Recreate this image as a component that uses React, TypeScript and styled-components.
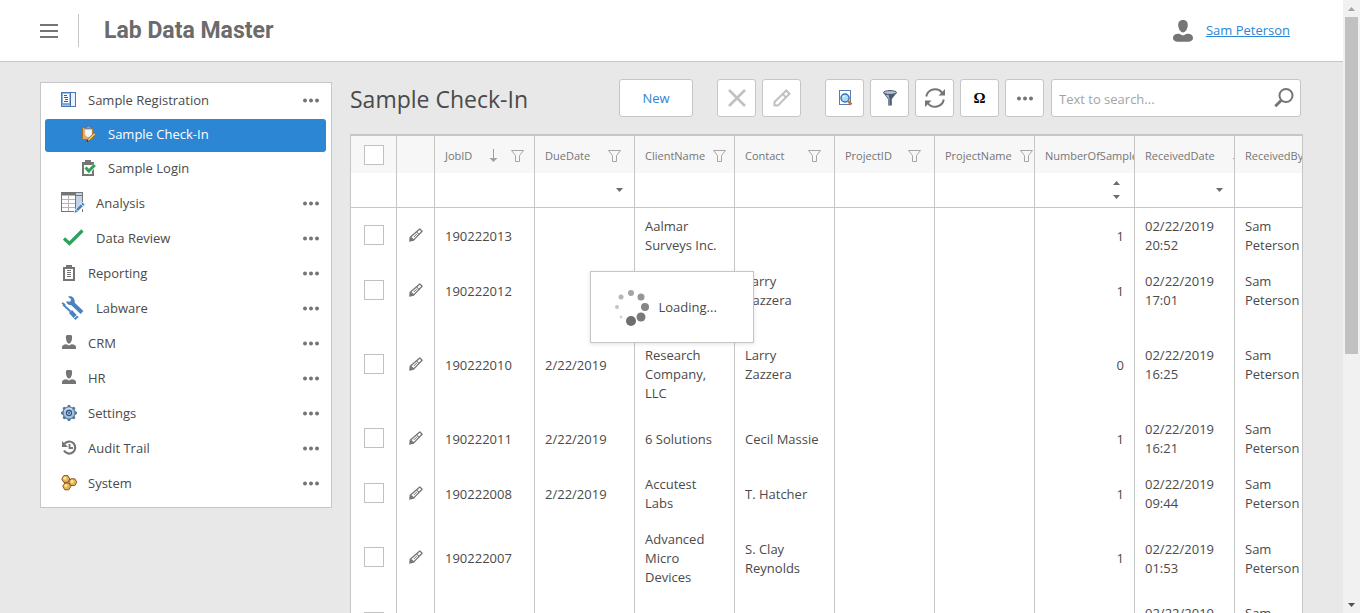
import React from 'react';
import styled, { createGlobalStyle } from 'styled-components';

const line = '#c6c6c6';
const blue = '#2c86d3';
const grey = '#757575';

const GlobalStyle = createGlobalStyle`
  * { box-sizing: border-box; }
  body {
    margin: 0;
    background: #e8e8e8;
    color: #4a4a4a;
    font: 13px/19px "Open Sans", "Noto Sans", sans-serif;
  }
  button, input { font: inherit; color: inherit; }
  svg { display: block; flex: none; }
`;

const Viewport = styled.div`
  display: flex;
  height: 100vh;
  overflow: hidden;
`;

const Page = styled.div`
  position: relative;
  flex: 1;
  min-width: 0;
  overflow: hidden;
`;

const ScrollTrack = styled.div`
  display: flex;
  flex-direction: column;
  width: 17px;
  background: #f1f1f1;
`;

const ScrollArrow = styled.button`
  display: grid;
  place-items: center;
  flex: none;
  height: 17px;
  padding: 0;
  border: 0;
  background: none;
`;

const ScrollThumb = styled.div`
  flex: 0 0 auto;
  height: 55%;
  margin: 0 2px;
  background: #c1c1c1;
`;

const ScrollRest = styled.div`
  flex: 1;
`;

const Header = styled.header`
  display: flex;
  align-items: center;
  height: 62px;
  padding: 0 53px 0 40px;
  background: #fff;
  border-bottom: 1px solid ${line};
`;

const PlainButton = styled.button`
  display: flex;
  padding: 0;
  border: 0;
  background: none;
  cursor: pointer;
`;

const HeaderRule = styled.span`
  width: 1px;
  height: 33px;
  margin: 0 25px 0 20px;
  background: ${line};
`;

const Logo = styled.span`
  flex: 1;
  color: #6b6b6b;
  font: bold 23px/32px Roboto, "Open Sans", sans-serif;
`;

const UserLink = styled.a`
  margin-left: 13px;
  color: ${blue};
`;

const Body = styled.div`
  display: flex;
  align-items: flex-start;
  gap: 18px;
  padding: 0 40px;
`;

const Sidebar = styled.nav`
  flex: 0 0 292px;
  margin-top: 20px;
  padding: 0 5px 6px 4px;
  background: #fff;
  border: 1px solid ${line};
`;

const NavList = styled.ul`
  margin: 0;
  padding: 0;
  list-style: none;
`;

const NavRow = styled.div`
  display: flex;
  align-items: center;
  height: 35px;
  padding: 0 7px 0 16px;
`;

const NavLink = styled.a`
  display: flex;
  flex: 1;
  align-items: center;
  gap: 11px;
  color: inherit;
  text-decoration: none;
  svg { margin-bottom: 2px; }
`;

const SubLink = styled.a<{ $active?: boolean }>`
  display: flex;
  align-items: center;
  gap: 11px;
  height: 33px;
  margin-top: 1px;
  padding: 0 36px 2px;
  border-radius: 3px;
  background: ${p => (p.$active ? blue : 'none')};
  color: ${p => (p.$active ? '#fff' : 'inherit')};
  text-decoration: none;
  svg { margin-bottom: 2px; }
`;

const Main = styled.main`
  flex: 1;
  min-width: 0;
`;

const Toolbar = styled.div`
  display: flex;
  align-items: center;
  gap: 7px;
  height: 72px;
  padding: 0 2px 0 0;
`;

const Title = styled.h1`
  flex: 1;
  margin: 0;
  padding-top: 1px;
  font-size: 23px;
  line-height: 32px;
  font-weight: 400;
`;

const ToolGroup = styled.div`
  display: flex;
  gap: 6px;
  margin-right: 17px;
  &:last-of-type { margin-right: 0; }
`;

const ToolButton = styled.button<{ $wide?: boolean }>`
  display: grid;
  place-items: center;
  width: ${p => (p.$wide ? 74 : 39)}px;
  height: 38px;
  padding: 0;
  background: #fff;
  border: 1px solid ${line};
  border-radius: 3px;
  color: ${blue};
`;

const Omega = styled.span`
  color: #000;
  font: bold 15px/20px "Liberation Serif", serif;
`;

const SearchBox = styled.label`
  display: flex;
  align-items: center;
  width: 250px;
  height: 38px;
  padding: 0 6px 0 7px;
  background: #fff;
  border: 1px solid ${line};
  border-radius: 3px;
`;

const SearchInput = styled.input`
  flex: 1;
  min-width: 0;
  padding: 2px 0 0;
  border: 0;
  outline: 0;
  background: none;
  &::placeholder { color: #a3a3a3; opacity: 1; }
`;

const GridFrame = styled.div`
  overflow: hidden;
  background: #fff;
  border: 1px solid ${line};
  border-top-width: 2px;
`;

const Grid = styled.table`
  width: 984px;
  table-layout: fixed;
  border-collapse: separate;
  border-spacing: 0;
`;

const HeadCell = styled.th<{ $mid?: boolean }>`
  height: 37px;
  padding: ${p => (p.$mid ? '0' : '2px 0 0 10px')};
  overflow: hidden;
  background: #f7f7f7;
  border-right: 1px solid ${line};
  color: ${grey};
  font-size: 11px;
  font-weight: 400;
  text-align: left;
`;

const HeadContent = styled.div`
  display: flex;
  align-items: center;
  width: 79px;
  white-space: nowrap;
`;

const SortMark = styled.span`
  margin-left: 17px;
`;

const FilterMark = styled.span<{ $afterSort?: boolean }>`
  margin-left: auto;
  padding: ${p => (p.$afterSort ? '0 3px 0 13px' : '0 3px 0 8px')};
`;

const FilterCell = styled.td`
  height: 35px;
  padding: 0;
  border-right: 1px solid ${line};
  border-bottom: 1px solid ${line};
`;

const FilterBox = styled.div`
  display: flex;
  align-items: center;
  height: 34px;
  padding: 0 11px 0 10px;
`;

const FilterInput = styled.input`
  flex: 1;
  min-width: 0;
  padding: 0;
  border: 0;
  outline: 0;
  background: none;
`;

const Spinner = styled.span`
  display: grid;
  gap: 10px;
  margin-right: 3px;
`;

const Cell = styled.td<{ $num?: boolean; $mid?: boolean }>`
  padding: ${p => (p.$mid ? '0 0 2px' : '9px 0 8px 10px')};
  padding-right: ${p => (p.$num ? '10px' : '0')};
  border-right: 1px solid ${line};
  text-align: ${p => (p.$num ? 'right' : 'left')};
  vertical-align: middle;
  white-space: pre-line;
`;

const Center = styled.div`
  display: grid;
  place-items: center;
`;

const CheckBox = styled.input`
  appearance: none;
  width: 20px;
  height: 20px;
  margin: 0;
  background: #fff;
  border: 1px solid #c1c1c1;
`;

const Overlay = styled.div`
  position: absolute;
  inset: 0;
  display: grid;
  place-items: center;
  pointer-events: none;
`;

const LoadingPanel = styled.div`
  display: flex;
  align-items: center;
  gap: 9px;
  width: 164px;
  height: 72px;
  padding: 2px 0 0 23px;
  background: #fff;
  border: 1px solid ${line};
  box-shadow: 0 1px 4px rgba(0, 0, 0, 0.12);
`;

const Dots = () => (
  <svg width="16" height="5" fill={grey}>
    <circle cx="2" cy="2.5" r="2" /><circle cx="8" cy="2.5" r="2" /><circle cx="14" cy="2.5" r="2" />
  </svg>
);

const Caret = ({ up, color = '#6b6b6b' }: { up?: boolean; color?: string }) => (
  <svg width="7" height="4" fill={color}><path d={up ? 'M0 4L3.5 0L7 4Z' : 'M0 0H7L3.5 4Z'} /></svg>
);

const Person = () => (
  <svg width="16" height="16" fill={grey}>
    <path d="M6.500 0h3c1.200 0 1.700.8 1.600 2.500C11 5.500 10 8 8 8.800 6 8 5 5.500 4.900 2.500 4.800.8 5.300 0 6.500 0Z" />
    <path d="M1 14v-2.200C1 10.500 2.500 9.500 5.500 9.200L8 10.500l2.500-1.300c3 .3 4.500 1.300 4.500 2.600V14Z" />
  </svg>
);

const UserIcon = () => (
  <svg width="20" height="22" fill={grey}>
    <path d="M10 0c3.300 0 5 2.200 4.800 5.300C14.600 8.700 12.600 12.500 10 12.500S5.400 8.700 5.200 5.300C5 2.200 6.700 0 10 0Z" />
    <path d="M0 18c0-2.800 2.500-4.200 5.500-4.200 2 0 2.500 1.600 4.500 1.600s2.500-1.600 4.500-1.600C17.500 13.800 20 15.200 20 18c0 2.600-2.500 3.800-5 3.800H5c-2.500 0-5-1.200-5-3.800Z" />
  </svg>
);

const RegistrationIcon = () => (
  <svg width="16" height="16">
    <rect x=".5" y=".5" width="14" height="14" fill="#9fbfe5" stroke="#4a78b5" />
    <path d="M1 3h2M1 6h2M1 9h2M1 12h8" stroke="#5d8dca" />
    <path d="M2 2h6v9H2Z" fill="#f8fbff" />
    <path d="M3 3.500h3M3 5.500h4M4 7.500h3M3 9.500h4" stroke="#4a5a70" />
    <path d="M10 1h4v13h-4Z" fill="#eaf2fb" />
    <path d="M9.500 1v13" stroke="#3f6eac" />
  </svg>
);

const CheckInIcon = () => (
  <svg width="16" height="16">
    <rect x="1.500" y="1.500" width="10" height="12" rx="1" fill="#e6ab5f" stroke="#b06a22" />
    <path d="M4 2.500h7V11H6.500L4 9Z" fill="#f4f7fd" stroke="#c5cde0" strokeWidth=".5" />
    <path d="M4 3V1.200h1.500L6.500 0h2l1 1.200H11V3Z" fill="#8d9bb6" stroke="#4f5e80" strokeWidth=".6" />
    <path d="m13 6.800 1.800 1.800-6.500 6L6 15.300l.8-2.300Z" fill="#f6c25b" stroke="#9d5f1c" strokeWidth=".8" />
    <path d="m5.500 15.800.6-2 1.600 1.400Z" fill="#222" />
  </svg>
);

const LoginIcon = () => (
  <svg width="16" height="16">
    <path d="M1 2h3V0h6v2h3v14H1Z" fill={grey} />
    <path d="M3 5h8v9H3Z" fill="#fff" />
    <path d="m4.500 7.500 3.500 4 6-6.500" fill="none" stroke="#fff" strokeWidth="4" />
    <path d="m4.500 7.500 3.300 3.500L13.800 5" fill="none" stroke="#2ba15a" strokeWidth="3" />
  </svg>
);

const AnalysisIcon = () => (
  <svg width="24" height="24">
    <path d="M0 1h22v20H0Z" fill="#fff" />
    <path d="M15 1h7v12l-7 8Z" fill="#c2d3e6" />
    <path d="M0 1h14v3.500H0Z" fill={grey} />
    <path d="M.5 1v20M22 1.500h-8M0 20.500h14M21.500 1v11M14.500 1v20M21.500 18v3" stroke={grey} fill="none" />
    <path d="M7.500 4v16M1 8.500h13M1 12.500h13M1 16.500h13" stroke="#b5b5b5" />
    <path d="M15 4.500h6" stroke={grey} />
    <path d="m21.500 11 2.500 2.500-7.800 7.800L13 22.500l1-3.700Z" fill="#4a82bf" stroke="#fff" strokeWidth=".8" />
    <path d="m19.500 12.500 3 3M14.500 18l2.300 2.300" stroke="#fff" strokeWidth=".8" />
  </svg>
);

const CheckIcon = () => (
  <svg width="24" height="24" fill="none" stroke="#2ba15a" strokeWidth="3.200">
    <path d="m3 12.500 5.500 5L21.500 4.500" />
  </svg>
);

const ReportIcon = () => (
  <svg width="16" height="16">
    <path d="M2 2h3V0h6v2h3v14H2Z" fill={grey} />
    <path d="M4 4h8v10H4Z" fill="#fff" />
    <path d="M6 5.500h4M6 7.500h4M6 9.500h4M6 11.500h4" stroke={grey} />
  </svg>
);

const LabwareIcon = () => (
  <svg width="24" height="24" fill="none" stroke="#4a82bf">
    <path d="M10.500 6.500 21 16.500" strokeWidth="4" />
    <path d="M7 .8 10.200 3.200 9.200 5.800 5.300 5.300C5.300 8 8 9.800 11 9l2.800-2.700C13.800 2.200 11-.8 7 .8Z" fill="#4a82bf" stroke="none" />
    <path d="M2 8.500 9.500 15.500" strokeWidth="1.800" />
    <path d="m.5 7.500 1.200-1.200 3 2L3.500 9.500Z" fill="#4a82bf" stroke="none" />
    <path d="m9.500 15.500 6.500 7" strokeWidth="4.200" />
    <path d="m13 22 3.600-3.300" stroke="#fff" />
  </svg>
);

const gearTeeth = [0, 45, 90, 135, 180, 225, 270, 315];
const SettingsIcon = () => (
  <svg width="16" height="16">
    <g fill="#56799f">
      {gearTeeth.map(a => <path key={a} d="M5.500 3 7 0h2l1.500 3Z" transform={`rotate(${a} 8 8)`} />)}
      <circle cx="8" cy="8" r="6.200" />
    </g>
    <circle cx="8" cy="8" r="5.400" fill="#a9c3dc" />
    <path d="M3.500 6A5 5 0 0 1 11 4" stroke="#dceaf7" fill="none" />
    <circle cx="8" cy="8" r="2.500" fill="#d8e8f6" stroke="#2f5583" strokeWidth="1.300" />
    <circle cx="8" cy="8" r="1" fill="#2f5583" />
  </svg>
);

const HistoryIcon = () => (
  <svg width="16" height="16" fill="none" stroke={grey} strokeWidth="2.200">
    <path d="M3.500 3.800A6 6 0 1 1 3 10.500" />
    <path d="M8.500 4v4H12" strokeWidth="1.800" />
    <path d="M1 1v6h6Z" fill={grey} stroke="none" />
  </svg>
);

const SystemIcon = () => (
  <svg width="16" height="16" stroke="#8a5426">
    {[[4.8, 4], [11.8, 7.2], [5.8, 11.4]].map(([x, y]) => (
      <g key={x}>
        <path d={`M${x - 2} ${y - 3.4}h4l2 3.400-2 3.400h-4l-2-3.400Z`} fill="#e6b450" strokeLinejoin="round" />
        <circle cx={x - 0.8} cy={y - 0.8} r="1.600" fill="#fbe3a0" stroke="none" />
      </g>
    ))}
  </svg>
);

const FunnelOutline = () => (
  <svg width="13" height="12" fill="none" stroke="#a6a6a6">
    <path d="M.5.5h12L8.500 5.500v6h-4v-6Z" />
  </svg>
);

const SortArrow = () => (
  <svg width="9" height="13" fill="#a0a0a0"><path d="M4 0h1v9h3.500l-4 4-4-4H4Z" /></svg>
);

const Pencil = () => (
  <svg width="14" height="14" fill="none" stroke={grey} strokeWidth="1.300">
    <path d="M10.800.9 13.100 3.200 4.800 11.900 1.500 9Z" strokeLinejoin="round" />
    <path d="m7.500 3.700 2.700 2.700M8.300 5.500 4.800 9" strokeWidth="1" />
    <path d="M.2 13.800 .6 8.800 5.200 12.800Z" fill={grey} stroke="none" />
  </svg>
);

const CrossIcon = () => (
  <svg width="18" height="18" stroke="#c1c1c1" strokeWidth="2.600"><path d="m1 1 16 16M17 1 1 17" /></svg>
);

const EditIcon = () => (
  <svg width="18" height="18" fill="none" stroke="#c1c1c1" strokeWidth="2">
    <path d="M13.300 1.500 16.500 4.700 5 16.500H1.500V13Z" />
    <path d="m9.500 5 3.500 3.500" />
    <path d="M1 13.500 4.500 17H1Z" fill="#c1c1c1" stroke="none" />
  </svg>
);

const PreviewIcon = () => (
  <svg width="16" height="16">
    <rect x="2.500" y=".5" width="11" height="14" fill="#fff" stroke="#5a79b8" />
    <circle cx="8" cy="8" r="4" fill="#a6dcf8" stroke="#3a75b0" strokeWidth="1.500" />
    <path d="M6 7.500A2 2 0 0 1 8.500 6" stroke="#fff" fill="none" />
    <path d="m11 11 3.500 3.500" stroke="#c27a32" strokeWidth="2.500" />
  </svg>
);

const FunnelIcon = () => (
  <svg width="16" height="16">
    <path d="M1 2.500 6 9v6.500h3.800V9L15 2.500Z" fill="#4d5a70" />
    <path d="m6.500 4.500 1 4.500v6h-1V8.500L3.500 4.500Z" fill="#aab6c7" />
    <ellipse cx="8" cy="2.500" rx="6.500" ry="1.900" fill="#b7c1cf" stroke="#46536a" />
  </svg>
);

const RefreshIcon = () => (
  <svg width="20" height="20" fill="none" stroke={grey} strokeWidth="2">
    <path d="M1.200 8.500A9 9 0 0 1 17.300 5M18.800 11.500A9 9 0 0 1 2.700 15" />
    <path d="M20 1v6.500h-6.500ZM0 19v-6.500h6.500Z" fill={grey} stroke="none" />
  </svg>
);

const SearchIcon = () => (
  <svg width="20" height="20" fill="none" stroke={grey} strokeWidth="2">
    <circle cx="12" cy="7.500" r="6.500" />
    <path d="m7.300 12.200-6 6" strokeWidth="3" />
  </svg>
);

const loadingDots = [
  [17, 31, 5, '#6e6e6e'], [27, 27, 4.5, '#7a7a7a'], [31, 17, 4, '#868686'], [27, 7, 3.5, '#969696'],
  [17, 3, 3, '#a5a5a5'], [7, 7, 2.5, '#b5b5b5'], [3, 17, 2, '#c4c4c4'], [7, 27, 1.5, '#d3d3d3'],
] as const;

const LoadingIcon = () => (
  <svg width="36" height="36">
    {loadingDots.map(([x, y, r, fill]) => <circle key={r} cx={x} cy={y} r={r} fill={fill} />)}
  </svg>
);

const navItems = [
  { label: 'Analysis', icon: <AnalysisIcon /> },
  { label: 'Data Review', icon: <CheckIcon /> },
  { label: 'Reporting', icon: <ReportIcon /> },
  { label: 'Labware', icon: <LabwareIcon /> },
  { label: 'CRM', icon: <Person /> },
  { label: 'HR', icon: <Person /> },
  { label: 'Settings', icon: <SettingsIcon /> },
  { label: 'Audit Trail', icon: <HistoryIcon /> },
  { label: 'System', icon: <SystemIcon /> },
];

type Filter = 'text' | 'date' | 'number';
const columns: { name: string; filter: Filter; sorted?: boolean }[] = [
  { name: 'JobID', filter: 'text', sorted: true },
  { name: 'DueDate', filter: 'date' },
  { name: 'ClientName', filter: 'text' },
  { name: 'Contact', filter: 'text' },
  { name: 'ProjectID', filter: 'text' },
  { name: 'ProjectName', filter: 'text' },
  { name: 'NumberOfSamples', filter: 'number' },
  { name: 'ReceivedDate', filter: 'date', sorted: true },
  { name: 'ReceivedBy', filter: 'text' },
];

const rows = [
  ['190222013', '', 'Aalmar\nSurveys Inc.', '', '', '', '1', '02/22/2019\n20:52', 'Sam\nPeterson'],
  ['190222012', '', '', 'Larry\nZazzera', '', '', '1', '02/22/2019\n17:01', 'Sam\nPeterson'],
  ['190222010', '2/22/2019', '\nResearch\nCompany,\nLLC', 'Larry\nZazzera', '', '', '0', '02/22/2019\n16:25', 'Sam\nPeterson'],
  ['190222011', '2/22/2019', '6 Solutions', 'Cecil Massie', '', '', '1', '02/22/2019\n16:21', 'Sam\nPeterson'],
  ['190222008', '2/22/2019', 'Accutest\nLabs', 'T. Hatcher', '', '', '1', '02/22/2019\n09:44', 'Sam\nPeterson'],
  ['190222007', '', 'Advanced\nMicro\nDevices', 'S. Clay\nReynolds', '', '', '1', '02/22/2019\n01:53', 'Sam\nPeterson'],
  ['', '', '', '', '', '', '', '02/22/2019\n01:53', 'Sam\nPeterson'],
];

const NavItem = ({ label, icon }: { label: string; icon: React.ReactNode }) => (
  <NavRow>
    <NavLink href="#">{icon}{label}</NavLink>
    <PlainButton aria-label={`${label} menu`}><Dots /></PlainButton>
  </NavRow>
);

export default function App() {
  return (
    <Viewport>
      <GlobalStyle />
      <Page>
        <Header>
          <PlainButton aria-label="Toggle navigation">
            <svg width="18" height="14" fill={grey}><path d="M0 0h18v2H0ZM0 6h18v2H0ZM0 12h18v2H0Z" /></svg>
          </PlainButton>
          <HeaderRule />
          <Logo>Lab Data Master</Logo>
          <UserIcon />
          <UserLink href="#">Sam Peterson</UserLink>
        </Header>
        <Body>
          <Sidebar>
            <NavList>
              <li>
                <NavItem label="Sample Registration" icon={<RegistrationIcon />} />
                <NavList>
                  <li><SubLink href="#" $active><CheckInIcon />Sample Check-In</SubLink></li>
                  <li><SubLink href="#"><LoginIcon />Sample Login</SubLink></li>
                </NavList>
              </li>
              {navItems.map(item => <li key={item.label}><NavItem {...item} /></li>)}
            </NavList>
          </Sidebar>
          <Main>
            <Toolbar>
              <Title>Sample Check-In</Title>
              <ToolGroup><ToolButton $wide>New</ToolButton></ToolGroup>
              <ToolGroup>
                <ToolButton aria-label="Delete" disabled><CrossIcon /></ToolButton>
                <ToolButton aria-label="Edit" disabled><EditIcon /></ToolButton>
              </ToolGroup>
              <ToolGroup>
                <ToolButton aria-label="Preview"><PreviewIcon /></ToolButton>
                <ToolButton aria-label="Filter"><FunnelIcon /></ToolButton>
                <ToolButton aria-label="Refresh"><RefreshIcon /></ToolButton>
                <ToolButton><Omega>Ω</Omega></ToolButton>
                <ToolButton aria-label="More"><Dots /></ToolButton>
              </ToolGroup>
              <SearchBox>
                <SearchInput placeholder="Text to search..." aria-label="Search" />
                <SearchIcon />
              </SearchBox>
            </Toolbar>
            <GridFrame>
              <Grid>
                <colgroup>
                  <col width="46" />
                  <col width="38" />
                  {columns.map(c => <col key={c.name} />)}
                </colgroup>
                <thead>
                  <tr>
                    <HeadCell $mid><Center><CheckBox type="checkbox" aria-label="Select all" /></Center></HeadCell>
                    <HeadCell />
                    {columns.map(c => (
                      <HeadCell key={c.name}>
                        <HeadContent>
                          {c.name}
                          {c.sorted && <SortMark><SortArrow /></SortMark>}
                          <FilterMark $afterSort={c.sorted}><FunnelOutline /></FilterMark>
                        </HeadContent>
                      </HeadCell>
                    ))}
                  </tr>
                  <tr>
                    <FilterCell />
                    <FilterCell />
                    {columns.map(c => (
                      <FilterCell key={c.name}>
                        <FilterBox>
                          <FilterInput aria-label={`Filter ${c.name}`} />
                          {c.filter === 'date' && <PlainButton aria-label="Choose date"><Caret /></PlainButton>}
                          {c.filter === 'number' && (
                            <Spinner>
                              <PlainButton aria-label="Increase"><Caret up /></PlainButton>
                              <PlainButton aria-label="Decrease"><Caret /></PlainButton>
                            </Spinner>
                          )}
                        </FilterBox>
                      </FilterCell>
                    ))}
                  </tr>
                </thead>
                <tbody>
                  {rows.map((row, i) => (
                    <tr key={i}>
                      <Cell $mid><Center><CheckBox type="checkbox" aria-label={`Select ${row[0]}`} /></Center></Cell>
                      <Cell $mid><Center><PlainButton aria-label={`Edit ${row[0]}`}><Pencil /></PlainButton></Center></Cell>
                      {row.map((value, j) => <Cell key={j} $num={columns[j].filter === 'number'}>{value}</Cell>)}
                    </tr>
                  ))}
                </tbody>
              </Grid>
            </GridFrame>
          </Main>
        </Body>
        <Overlay>
          <LoadingPanel role="status"><LoadingIcon />Loading...</LoadingPanel>
        </Overlay>
      </Page>
      <ScrollTrack>
        <ScrollArrow aria-label="Scroll up"><Caret up color="#a3a3a3" /></ScrollArrow>
        <ScrollThumb />
        <ScrollRest />
        <ScrollArrow aria-label="Scroll down"><Caret color="#505050" /></ScrollArrow>
      </ScrollTrack>
    </Viewport>
  );
}
